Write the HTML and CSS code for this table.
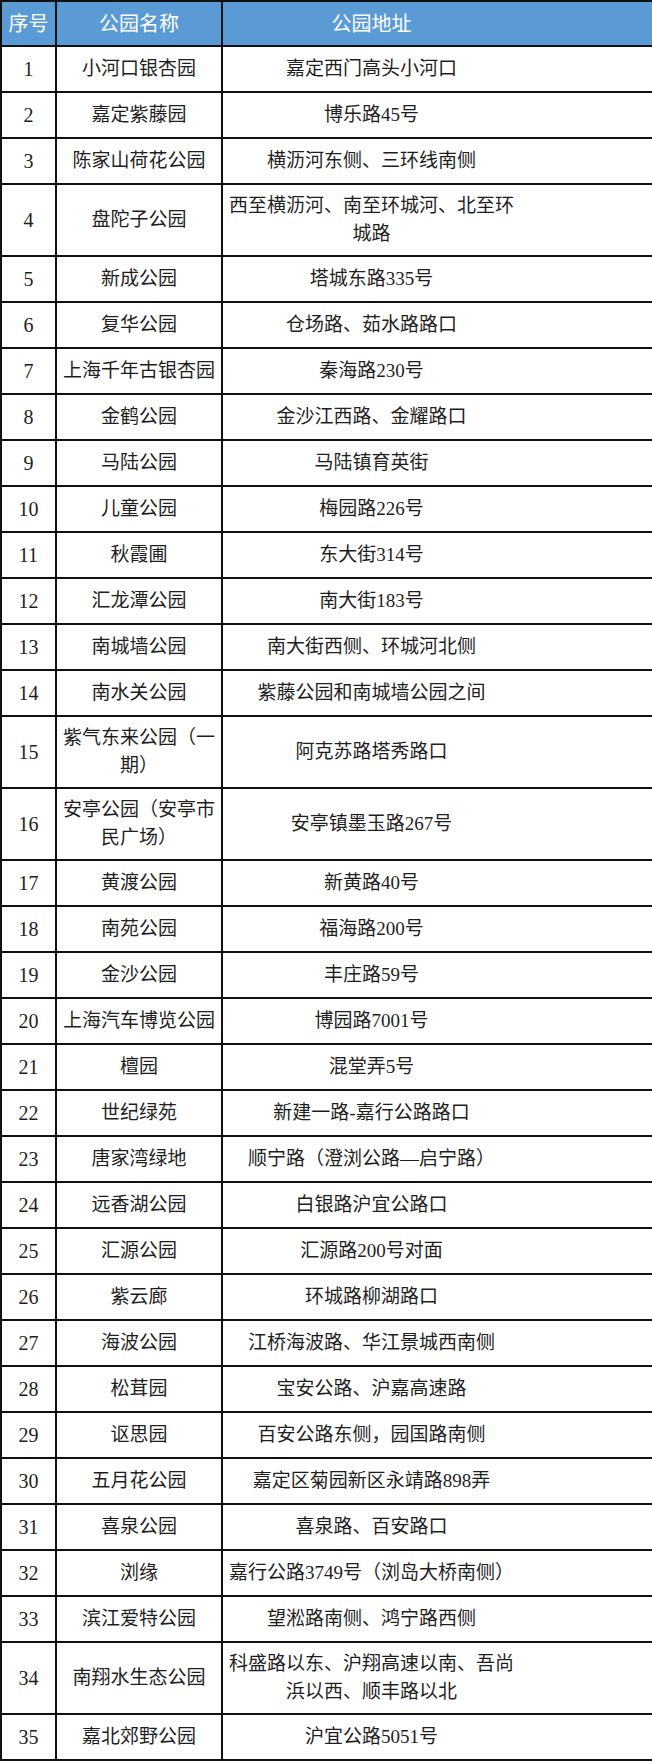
FILE: index.html
```html
<!DOCTYPE html>
<html lang="zh-CN">
<head>
<meta charset="utf-8">
<title>嘉定公园列表</title>
<link rel="stylesheet" href="styles.css">
</head>
<body>
<table class="parks">
  <colgroup>
    <col class="c-no">
    <col class="c-name">
    <col class="c-addr">
  </colgroup>
  <thead>
    <tr><th class="no">序号</th><th class="name">公园名称</th><th class="addr">公园地址</th></tr>
  </thead>
  <tbody>
    <tr><td class="no">1</td><td class="name">小河口银杏园</td><td class="addr">嘉定西门高头小河口</td></tr>
    <tr><td class="no">2</td><td class="name">嘉定紫藤园</td><td class="addr">博乐路45号</td></tr>
    <tr><td class="no">3</td><td class="name">陈家山荷花公园</td><td class="addr">横沥河东侧、三环线南侧</td></tr>
    <tr class="tall"><td class="no">4</td><td class="name">盘陀子公园</td><td class="addr">西至横沥河、南至环城河、北至环城路</td></tr>
    <tr><td class="no">5</td><td class="name">新成公园</td><td class="addr">塔城东路335号</td></tr>
    <tr><td class="no">6</td><td class="name">复华公园</td><td class="addr">仓场路、茹水路路口</td></tr>
    <tr><td class="no">7</td><td class="name">上海千年古银杏园</td><td class="addr">秦海路230号</td></tr>
    <tr><td class="no">8</td><td class="name">金鹤公园</td><td class="addr">金沙江西路、金耀路口</td></tr>
    <tr><td class="no">9</td><td class="name">马陆公园</td><td class="addr">马陆镇育英街</td></tr>
    <tr><td class="no">10</td><td class="name">儿童公园</td><td class="addr">梅园路226号</td></tr>
    <tr><td class="no">11</td><td class="name">秋霞圃</td><td class="addr">东大街314号</td></tr>
    <tr><td class="no">12</td><td class="name">汇龙潭公园</td><td class="addr">南大街183号</td></tr>
    <tr><td class="no">13</td><td class="name">南城墙公园</td><td class="addr">南大街西侧、环城河北侧</td></tr>
    <tr><td class="no">14</td><td class="name">南水关公园</td><td class="addr">紫藤公园和南城墙公园之间</td></tr>
    <tr class="tall"><td class="no">15</td><td class="name">紫气东来公园（一期）</td><td class="addr">阿克苏路塔秀路口</td></tr>
    <tr class="tall"><td class="no">16</td><td class="name">安亭公园（安亭市民广场）</td><td class="addr">安亭镇墨玉路267号</td></tr>
    <tr><td class="no">17</td><td class="name">黄渡公园</td><td class="addr">新黄路40号</td></tr>
    <tr><td class="no">18</td><td class="name">南苑公园</td><td class="addr">福海路200号</td></tr>
    <tr><td class="no">19</td><td class="name">金沙公园</td><td class="addr">丰庄路59号</td></tr>
    <tr><td class="no">20</td><td class="name">上海汽车博览公园</td><td class="addr">博园路7001号</td></tr>
    <tr><td class="no">21</td><td class="name">檀园</td><td class="addr">混堂弄5号</td></tr>
    <tr><td class="no">22</td><td class="name">世纪绿苑</td><td class="addr">新建一路-嘉行公路路口</td></tr>
    <tr><td class="no">23</td><td class="name">唐家湾绿地</td><td class="addr">顺宁路（澄浏公路—启宁路）</td></tr>
    <tr><td class="no">24</td><td class="name">远香湖公园</td><td class="addr">白银路沪宜公路口</td></tr>
    <tr><td class="no">25</td><td class="name">汇源公园</td><td class="addr">汇源路200号对面</td></tr>
    <tr><td class="no">26</td><td class="name">紫云廊</td><td class="addr">环城路柳湖路口</td></tr>
    <tr><td class="no">27</td><td class="name">海波公园</td><td class="addr">江桥海波路、华江景城西南侧</td></tr>
    <tr><td class="no">28</td><td class="name">松茸园</td><td class="addr">宝安公路、沪嘉高速路</td></tr>
    <tr><td class="no">29</td><td class="name">讴思园</td><td class="addr">百安公路东侧，园国路南侧</td></tr>
    <tr><td class="no">30</td><td class="name">五月花公园</td><td class="addr">嘉定区菊园新区永靖路898弄</td></tr>
    <tr><td class="no">31</td><td class="name">喜泉公园</td><td class="addr">喜泉路、百安路口</td></tr>
    <tr><td class="no">32</td><td class="name">浏缘</td><td class="addr">嘉行公路3749号（浏岛大桥南侧）</td></tr>
    <tr><td class="no">33</td><td class="name">滨江爱特公园</td><td class="addr">望淞路南侧、鸿宁路西侧</td></tr>
    <tr class="tall"><td class="no">34</td><td class="name">南翔水生态公园</td><td class="addr">科盛路以东、沪翔高速以南、吾尚浜以西、顺丰路以北</td></tr>
    <tr><td class="no">35</td><td class="name">嘉北郊野公园</td><td class="addr">沪宜公路5051号</td></tr>
  </tbody>
</table>
</body>
</html>
```

FILE: styles.css
```css
html, body {
  margin: 0;
  padding: 0;
  background: #ffffff;
}

.parks {
  width: 652px;
  table-layout: fixed;
  border-collapse: collapse;
  font-family: "Liberation Serif", "Noto Sans CJK SC", serif;
  font-size: 19px;
  line-height: 28px;
  color: #1e1e1e;
}

.c-no { width: 55px; }
.c-name { width: 166px; }
.c-addr { width: 431px; }

.parks th,
.parks td {
  border: 2px solid #111111;
  text-align: center;
  vertical-align: middle;
  padding: 0 3px;
  height: 46px;
  box-sizing: border-box;
}

.parks th {
  background: #5b9bd5;
  color: #ffffff;
  font-weight: normal;
  font-size: 20px;
  height: 45px;
}

.parks .addr {
  padding: 0 132px 0 0;
}

.parks td.no {
  font-size: 20px;
  padding: 0;
}

.parks tr.tall td {
  height: 72px;
}
```
